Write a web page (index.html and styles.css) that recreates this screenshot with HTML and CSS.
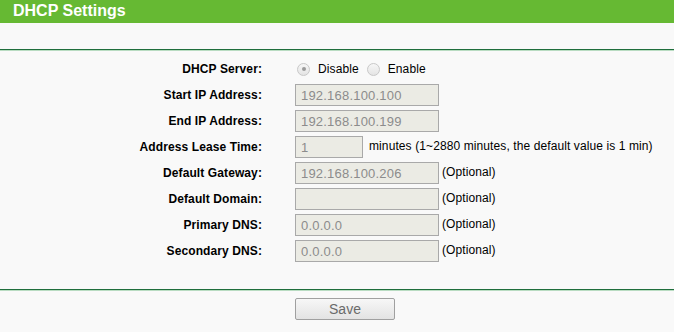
FILE: index.html
```html
<!DOCTYPE html>
<html lang="en">
<head>
<meta charset="UTF-8" />
<meta name="viewport" content="width=device-width, initial-scale=1.0" />
<title>DHCP Settings</title>
<link rel="stylesheet" href="styles.css">
</head>
<body>
<div class="title-bar">DHCP Settings</div>
<div class="divider top"></div>
<form class="dhcp-form">
    <div class="label">DHCP Server:</div>
    <div class="field radios">
        <label class="radio-opt"><input type="radio" name="dhcp" checked disabled> Disable</label>
        <label class="radio-opt"><input type="radio" name="dhcp" disabled> Enable</label>
    </div>

    <div class="label">Start IP Address:</div>
    <div class="field"><input class="text" type="text" value="192.168.100.100" disabled></div>

    <div class="label">End IP Address:</div>
    <div class="field"><input class="text" type="text" value="192.168.100.199" disabled></div>

    <div class="label">Address Lease Time:</div>
    <div class="field"><input class="text short" type="text" value="1" disabled><span class="hint">minutes (1~2880 minutes, the default value is 1 min)</span></div>

    <div class="label">Default Gateway:</div>
    <div class="field"><input class="text" type="text" value="192.168.100.206" disabled><span class="hint">(Optional)</span></div>

    <div class="label">Default Domain:</div>
    <div class="field"><input class="text" type="text" value="" disabled><span class="hint">(Optional)</span></div>

    <div class="label">Primary DNS:</div>
    <div class="field"><input class="text" type="text" value="0.0.0.0" disabled><span class="hint">(Optional)</span></div>

    <div class="label">Secondary DNS:</div>
    <div class="field"><input class="text" type="text" value="0.0.0.0" disabled><span class="hint">(Optional)</span></div>
</form>
<div class="divider bottom"></div>
<div class="actions">
    <button type="button" class="btn">Save</button>
</div>
</body>
</html>
```

FILE: styles.css
```css
body { margin: 0; background: #f9f9f9; color: #000; font-family: "Liberation Sans", Arial, sans-serif; font-size: 12px; letter-spacing: 0.1px; }
.title-bar { height: 23px; line-height: 22px; background: #66b933; color: #fff; font-size: 16px; font-weight: bold; padding-left: 13px; letter-spacing: 0; }
.divider { height: 1px; background: #1f6e3c; border-bottom: 1px solid #b9dcc2; }
.divider.top { margin-top: 26px; }
.divider.bottom { margin-top: 25px; }
.dhcp-form { display: grid; grid-template-columns: 262px auto; grid-auto-rows: 26px; column-gap: 33px; margin: 5px 0 0 0; }
.label { font-weight: bold; text-align: right; display: flex; align-items: center; justify-content: flex-end; }
.field { display: flex; align-items: center; }
.radio-opt { display: flex; align-items: center; margin-right: 5px; }
.radio-opt input { appearance: none; -webkit-appearance: none; width: 13px; height: 13px; margin: 0 8px 0 2px; border: 1px solid #c8c8c8; border-radius: 50%; background: linear-gradient(#f6f6f6, #e4e4e4); position: relative; }
.radio-opt input:checked::after { content: ""; position: absolute; left: 3.5px; top: 3.5px; width: 4px; height: 4px; border-radius: 50%; background: #9a9a9a; }
.radio-opt + .radio-opt input { margin-left: 3px; }
.text { box-sizing: border-box; width: 144px; height: 22px; margin: 0; padding: 0 5px; border: 1px solid #a9a9a9; background: #ebebe4; color: #8c8c8c; font-family: "Liberation Sans", Arial, sans-serif; font-size: 13px; letter-spacing: 0.2px; }
.text.short { width: 68px; }
.hint { margin-left: 3px; margin-top: -2px; }
.text.short + .hint { margin-left: 6px; }
.actions { padding-top: 7px; padding-left: 295px; }
.btn { box-sizing: border-box; width: 100px; height: 22px; border: 1px solid #a0a0a0; border-radius: 2px; background: linear-gradient(#f7f7f7, #e3e3e3); color: #6a6a6a; font-family: "Liberation Sans", Arial, sans-serif; font-size: 14px; padding: 0; }
```
